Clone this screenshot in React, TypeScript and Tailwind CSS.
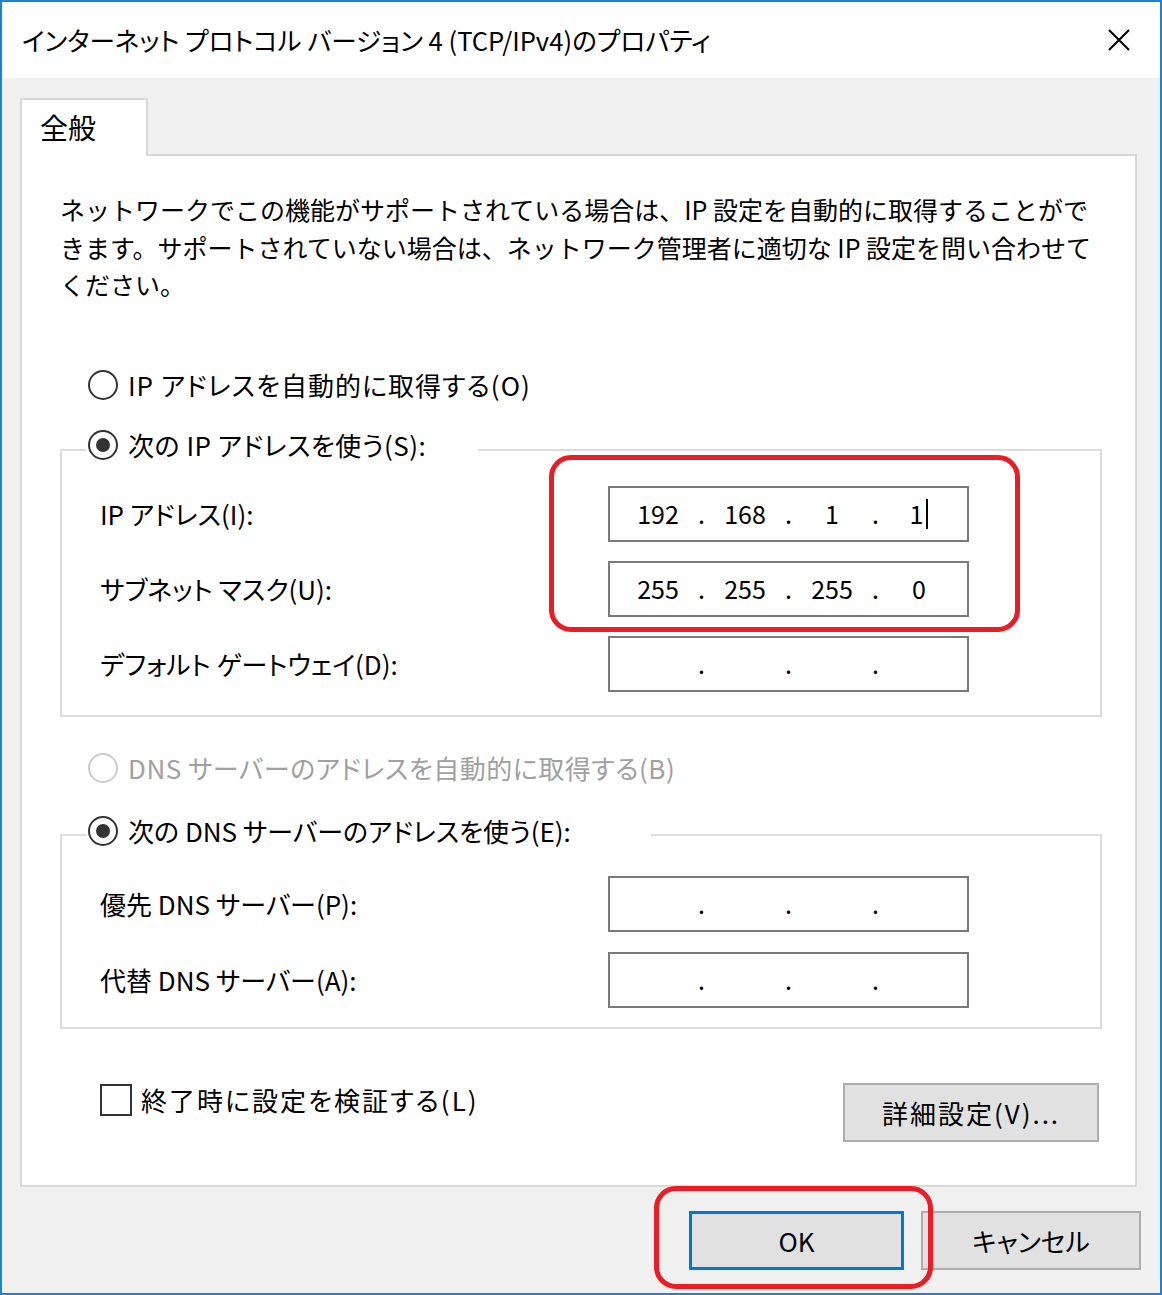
import { Fragment } from "react";

const Radio = ({ checked, disabled }: { checked?: boolean; disabled?: boolean }) => (
  <span
    className={`w-[30px] h-[30px] shrink-0 rounded-full border-2 bg-white flex items-center justify-center ${
      disabled ? "border-[#cccccc]" : "border-[#333333]"
    }`}
  >
    {checked && <span className="w-[14px] h-[14px] rounded-full bg-[#333333]" />}
  </span>
);

const IpField = ({ octets, caret }: { octets: string[]; caret?: boolean }) => (
  <div className="w-[361px] h-[56px] border-2 border-[#7a7a7a] bg-white flex items-center pl-[14px] text-[25px] text-black">
    {[0, 1, 2, 3].map((i) => (
      <Fragment key={i}>
        <span className="w-[68px] flex items-center justify-center">
          {octets[i]}
          {caret && i === 3 && <span className="inline-block w-[2px] h-[30px] bg-black ml-[3px]" />}
        </span>
        {i < 3 && <span className="w-[19px] text-center">.</span>}
      </Fragment>
    ))}
  </div>
);

const FieldRow = ({ label, octets, caret }: { label: string; octets: string[]; caret?: boolean }) => (
  <div className="flex items-center">
    <span className="w-[546px] pl-[38px] text-[26px] whitespace-nowrap">{label}</span>
    <IpField octets={octets} caret={caret} />
  </div>
);

const empty = ["", "", "", ""];

export default function App() {
  return (
    <div className="relative w-[1162px] h-[1295px] border-2 border-[#1883d7] bg-[#f0f0f0] flex flex-col text-black [font-family:'Noto_Sans_CJK_JP','Noto_Sans',sans-serif] [font-feature-settings:'palt']">
      {/* Title bar */}
      <div className="h-[76px] bg-white flex items-center justify-between pl-[20px] pr-[30px]">
        <span className="text-[25.6px] whitespace-nowrap">インターネット プロトコル バージョン 4 (TCP/IPv4)のプロパティ</span>
        <svg width="22" height="22" viewBox="0 0 22 22">
          <path d="M1 1 L21 21 M21 1 L1 21" stroke="#000" strokeWidth="2" />
        </svg>
      </div>

      {/* Body */}
      <div className="flex-1 flex flex-col pt-[20px] pl-[18px] pr-[23px]">
        <div className="relative z-10 w-[128px] h-[58px] -mb-[2px] bg-white border-2 border-b-0 border-[#d9d9d9] pl-[18px] pt-[6px] text-[28px]">
          全般
        </div>
        <div className="w-[1117px] h-[1033px] bg-white border-2 border-[#d9d9d9] flex flex-col">
          {/* description */}
          <div className="pt-[35px] pl-[38px] text-[25px] leading-[37.5px] whitespace-nowrap [font-feature-settings:normal]">
            <div>ネットワークでこの機能がサポートされている場合は、IP 設定を自動的に取得することがで</div>
            <div>きます。サポートされていない場合は、ネットワーク管理者に適切な IP 設定を問い合わせて</div>
            <div>ください。</div>
          </div>

          <div className="mt-[61px] h-[40px] pl-[66px] flex items-center gap-[10px] text-[26px] whitespace-nowrap">
            <Radio />
            <span className="tracking-[1px]">IP アドレスを自動的に取得する(O)</span>
          </div>

          <fieldset className="mt-[20px] ml-[38px] w-[1042px] border-2 border-[#dcdcdc] pt-[11px] pb-[23px]">
            <legend className="ml-[24px] pl-[2px] pr-[52px] h-[50px]">
              <div className="h-[40px] flex items-center gap-[10px] text-[26px] whitespace-nowrap">
                <Radio checked />
                <span className="tracking-[0.5px]">次の IP アドレスを使う(S):</span>
              </div>
            </legend>
            <div className="flex flex-col gap-[19px]">
              <FieldRow label="IP アドレス(I):" octets={["192", "168", "1", "1"]} caret />
              <FieldRow label="サブネット マスク(U):" octets={["255", "255", "255", "0"]} />
              <FieldRow label="デフォルト ゲートウェイ(D):" octets={empty} />
            </div>
          </fieldset>

          <div className="mt-[31px] h-[40px] pl-[66px] flex items-center gap-[10px] text-[26px] text-[#a0a0a0] whitespace-nowrap">
            <Radio disabled />
            <span className="tracking-[0.5px]">DNS サーバーのアドレスを自動的に取得する(B)</span>
          </div>

          <fieldset className="mt-[23px] ml-[38px] w-[1042px] border-2 border-[#dcdcdc] pt-[17px] pb-[19px]">
            <legend className="ml-[24px] pl-[2px] pr-[80px] h-[48px]">
              <div className="h-[40px] flex items-center gap-[10px] text-[26px] whitespace-nowrap">
                <Radio checked />
                <span>次の DNS サーバーのアドレスを使う(E):</span>
              </div>
            </legend>
            <div className="flex flex-col gap-[20px]">
              <FieldRow label="優先 DNS サーバー(P):" octets={empty} />
              <FieldRow label="代替 DNS サーバー(A):" octets={empty} />
            </div>
          </fieldset>

          <div className="mt-[54px] pl-[78px] pr-[36px] flex items-start justify-between">
            <div className="flex items-center gap-[9px] h-[34px] text-[26px] whitespace-nowrap">
              <span className="w-[32px] h-[32px] border-2 border-[#333333] bg-white" />
              <span className="tracking-[2px]">終了時に設定を検証する(L)</span>
            </div>
            <div className="w-[256px] h-[59px] bg-[#e1e1e1] border-2 border-[#adadad] flex items-center justify-center text-[26px] tracking-[2px]">
              詳細設定(V)...
            </div>
          </div>
        </div>

        {/* dialog buttons */}
        <div className="mt-[24px] flex justify-end gap-[17px] -mr-[4px]">
          <div className="w-[215px] h-[59px] bg-[#e1e1e1] border-[3px] border-[#0078d7] flex items-center justify-center text-[26px]">
            OK
          </div>
          <div className="w-[220px] h-[59px] bg-[#e1e1e1] border-2 border-[#adadad] flex items-center justify-center text-[26px]">
            キャンセル
          </div>
        </div>
      </div>

      {/* red annotation frames */}
      <div className="absolute left-[547px] top-[453px] w-[471px] h-[177px] border-[5px] border-[#ec1c24] rounded-[22px] pointer-events-none" />
      <div className="absolute left-[652px] top-[1184px] w-[279px] h-[103px] border-[5px] border-[#ec1c24] rounded-[22px] pointer-events-none" />
    </div>
  );
}
